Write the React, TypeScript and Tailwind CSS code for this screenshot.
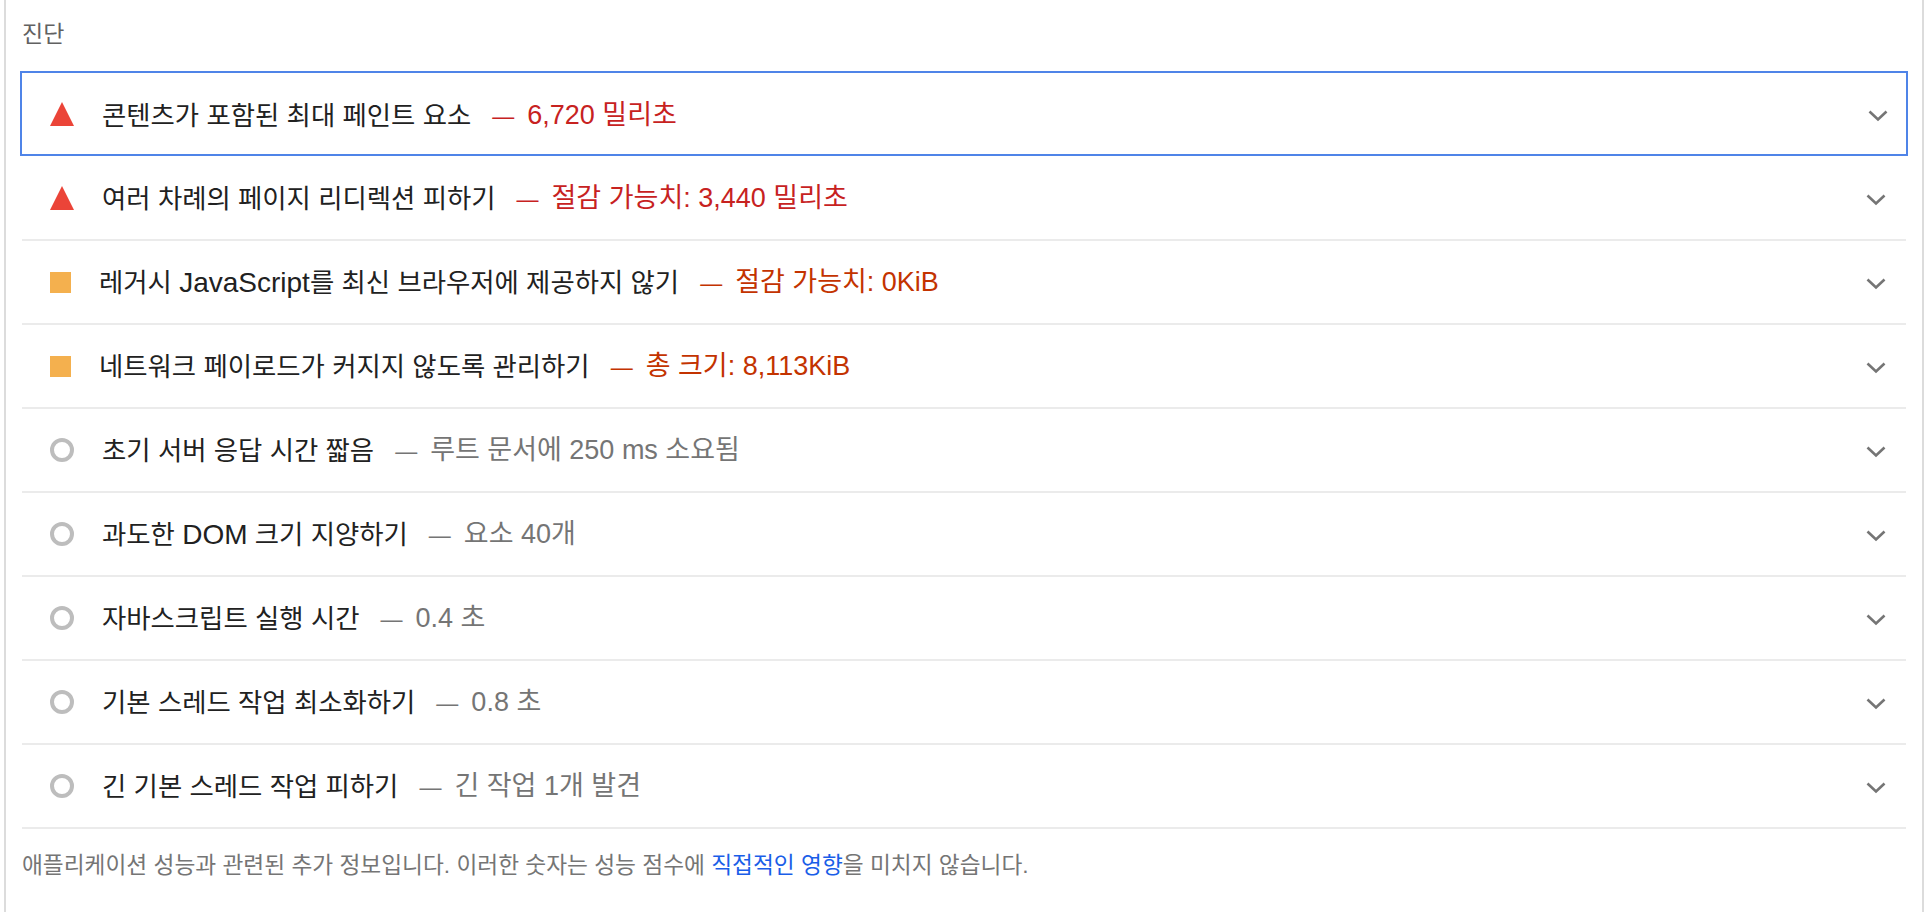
import { ReactNode } from 'react';

type Status = 'fail' | 'average' | 'info';

interface Audit {
  id: string;
  title: ReactNode;
  display: string;
  status: Status;
  displayClass: string;
  focused?: boolean;
}

const audits: Audit[] = [
  { id: 'lcp', title: '콘텐츠가 포함된 최대 페인트 요소', display: '6,720 밀리초', status: 'fail', displayClass: 'text-[#c7221f]', focused: true },
  { id: 'redirects', title: '여러 차례의 페이지 리디렉션 피하기', display: '절감 가능치: 3,440 밀리초', status: 'fail', displayClass: 'text-[#c7221f]' },
  {
    id: 'legacy-js',
    title: (
      <>
        레거시 <span className="text-[28px]">JavaScript</span>를 최신 브라우저에 제공하지 않기
      </>
    ),
    display: '절감 가능치: 0KiB',
    status: 'average',
    displayClass: 'text-[#c33300]',
  },
  { id: 'payload', title: '네트워크 페이로드가 커지지 않도록 관리하기', display: '총 크기: 8,113KiB', status: 'average', displayClass: 'text-[#c33300]' },
  { id: 'ttfb', title: '초기 서버 응답 시간 짧음', display: '루트 문서에 250 ms 소요됨', status: 'info', displayClass: 'text-[#757575]' },
  {
    id: 'dom-size',
    title: (
      <>
        과도한 <span className="text-[28px]">DOM</span> 크기 지양하기
      </>
    ),
    display: '요소 40개',
    status: 'info',
    displayClass: 'text-[#757575]',
  },
  { id: 'bootup', title: '자바스크립트 실행 시간', display: '0.4 초', status: 'info', displayClass: 'text-[#757575]' },
  { id: 'mainthread', title: '기본 스레드 작업 최소화하기', display: '0.8 초', status: 'info', displayClass: 'text-[#757575]' },
  { id: 'long-tasks', title: '긴 기본 스레드 작업 피하기', display: '긴 작업 1개 발견', status: 'info', displayClass: 'text-[#757575]' },
];

function StatusIcon({ status }: { status: Status }) {
  if (status === 'fail') {
    return (
      <svg width="24" height="24" viewBox="0 0 24 24" className="shrink-0">
        <polygon points="12,0 24,24 0,24" fill="#eb4438" />
      </svg>
    );
  }
  if (status === 'average') {
    return <div className="w-[21px] h-[21px] shrink-0 mr-[1px] bg-[#f4b04e]" />;
  }
  return <div className="w-6 h-6 shrink-0 rounded-full border-[4px] border-[#bdbdbd]" />;
}

function Chevron({ focused }: { focused?: boolean }) {
  return (
    <svg
      width="20"
      height="12"
      viewBox="0 0 20 12"
      fill="none"
      className={`shrink-0 ${focused ? 'mr-[18px] mt-[5px]' : 'mr-[20px] mt-[3px]'}`}
    >
      <path d="M1.5 1.5 L10 9.5 L18.5 1.5" stroke="#757575" strokeWidth="2.6" />
    </svg>
  );
}

function AuditRow({ audit }: { audit: Audit }) {
  const frame = audit.focused
    ? 'h-[85px] mb-[1px] border-2 border-[#4f84e8] w-[1888px] -ml-[2px]'
    : 'h-[84px] border-b-2 border-[#ebebeb]';
  const textTop = audit.focused ? 'pt-[4px]' : 'pt-[2px]';

  return (
    <div className={`flex items-center ${frame}`}>
      <div className="flex items-center flex-1 pl-[28px]">
        <StatusIcon status={audit.status} />
        <span className={`${audit.status === 'average' ? 'ml-[27px]' : 'ml-[28px]'} ${textTop} text-[#212121]`}>
          {audit.title}
        </span>
        <span className={`ml-[21px] ${textTop} text-[27px] ${audit.displayClass}`}>
          <span className="text-[22px] mr-[13px]">—</span>
          {audit.display}
        </span>
      </div>
      <Chevron focused={audit.focused} />
    </div>
  );
}

export default function App() {
  return (
    <div className="h-[912px] w-[1932px] bg-white overflow-hidden font-['Liberation_Sans','Noto_Sans_CJK_KR',sans-serif]">
      <div className="h-full mx-[4px] w-[1920px] border-x-2 border-[#dcdcdc] px-[16px]">
        <div className="h-[68px] pt-[18px] text-[23px] leading-[32px] text-[#616161]">진단</div>
        <div className="w-[1884px] pt-[3px] text-[26.4px] leading-[32px]">
          {audits.map((audit) => (
            <AuditRow key={audit.id} audit={audit} />
          ))}
        </div>
        <p className="mt-[20px] text-[22.7px] leading-[32px] text-[#757575]">
          애플리케이션 성능과 관련된 추가 정보입니다. 이러한 숫자는 성능 점수에{' '}
          <a className="text-[#1a5ee8]">직접적인 영향</a>을 미치지 않습니다.
        </p>
      </div>
    </div>
  );
}
